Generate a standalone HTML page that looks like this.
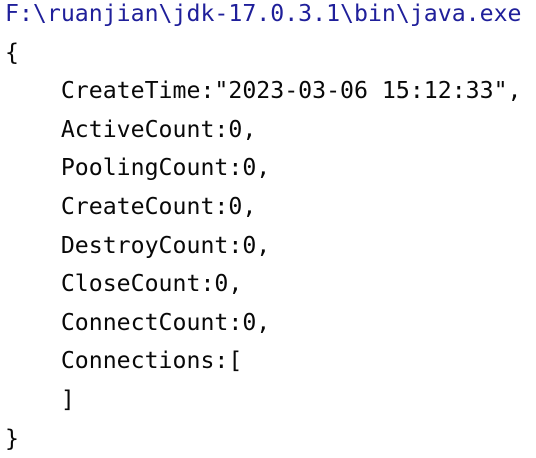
<!DOCTYPE html><html><head><style>
body{margin:0;background:#fff;width:536px;height:454px;overflow:hidden}
pre{margin:0;position:absolute;left:5px;top:-5px;font-family:"DejaVu Sans Mono","Liberation Mono",monospace;font-size:23.2px;line-height:38.6px;color:#080808}
.b{color:#1f1f9a}
</style></head><body><pre><span class="b">F:\ruanjian\jdk-17.0.3.1\bin\java.exe</span>
{
    CreateTime:"2023-03-06 15:12:33",
    ActiveCount:0,
    PoolingCount:0,
    CreateCount:0,
    DestroyCount:0,
    CloseCount:0,
    ConnectCount:0,
    Connections:[
    ]
}</pre></body></html>
